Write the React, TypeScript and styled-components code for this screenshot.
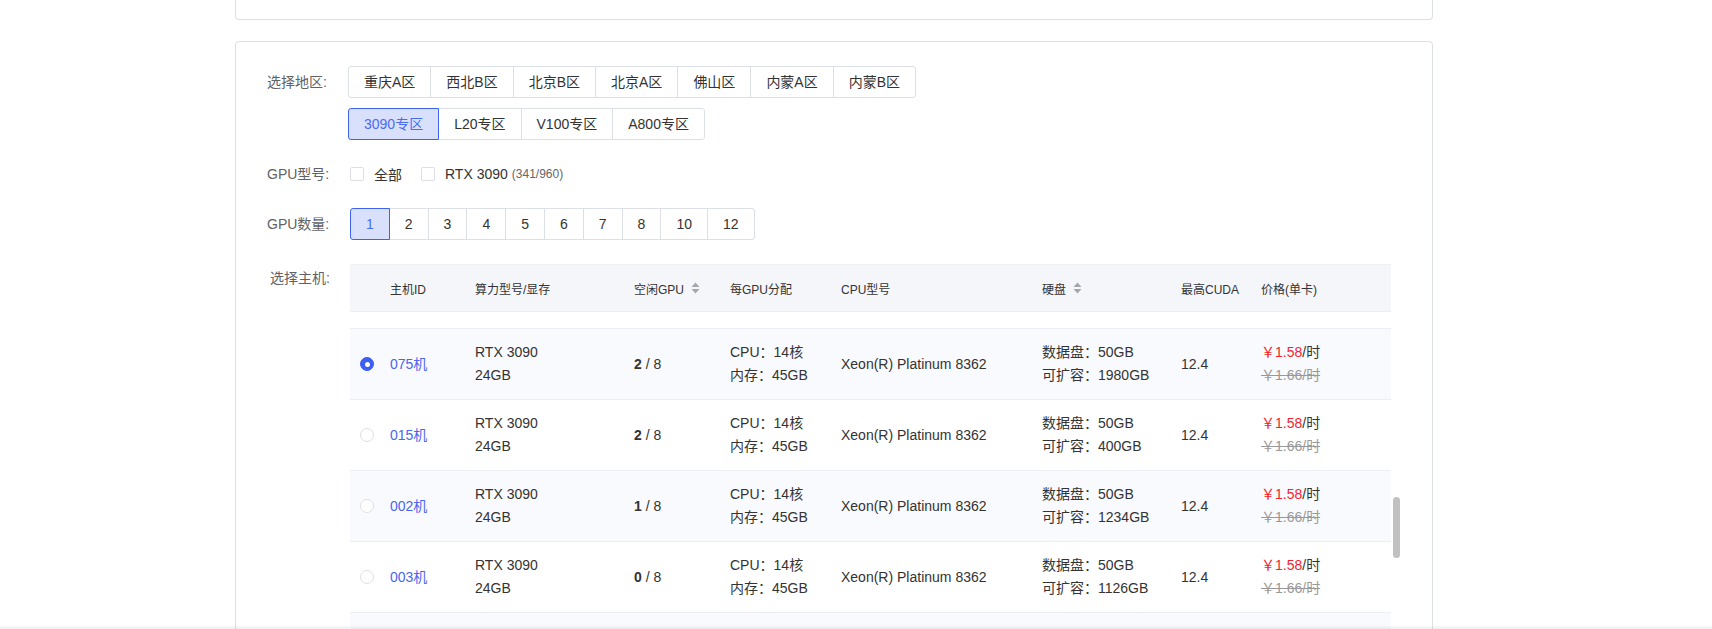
import React from 'react';
import styled, { createGlobalStyle } from 'styled-components';

const Global = createGlobalStyle`
  html, body { margin: 0; padding: 0; background: #fff; overflow: hidden; }
  body {
    font-family: "Liberation Sans", "Noto Sans CJK SC", sans-serif;
    color: #333;
    -webkit-font-smoothing: antialiased;
  }
  * { box-sizing: border-box; }
`;

const Page = styled.div`
  padding-left: 235px;
  width: 1433px;
`;

const TopCard = styled.div`
  height: 20px;
  border: 1px solid #dcdfe6;
  border-top: none;
  border-radius: 0 0 4px 4px;
  background: #fff;
`;

const MainCard = styled.div`
  margin-top: 21px;
  height: 800px;
  border: 1px solid #dcdfe6;
  border-radius: 4px;
  background: #fff;
  padding: 24px 30px 0 31px;
  display: flex;
  flex-direction: column;
`;

const FormItem = styled.div<{ $top?: boolean; $mt?: number }>`
  display: flex;
  align-items: ${p => (p.$top ? 'flex-start' : 'center')};
  margin-bottom: 18px;
  margin-top: ${p => p.$mt || 0}px;
`;

const Label = styled.div<{ $pl?: number; $lh?: number }>`
  width: 81px;
  flex-shrink: 0;
  font-size: 14px;
  color: #606266;
  line-height: ${p => p.$lh || 32}px;
  padding-left: ${p => p.$pl || 0}px;
  white-space: nowrap;
`;

const GroupStack = styled.div`
  display: flex;
  flex-direction: column;
  gap: 10px;
`;

const ButtonGroup = styled.div<{ $ml?: number }>`
  display: flex;
  margin-left: ${p => p.$ml || 0}px;
`;

const OptButton = styled.div<{ $active?: boolean }>`
  position: relative;
  z-index: ${p => (p.$active ? 1 : 0)};
  height: 32px;
  padding: 0 15px;
  display: flex;
  align-items: center;
  font-size: 14px;
  line-height: 1;
  white-space: nowrap;
  border: 1px solid ${p => (p.$active ? '#3d63f0' : '#dcdfe6')};
  background: ${p => (p.$active ? '#d9e0fc' : '#fff')};
  color: ${p => (p.$active ? '#4a6cf0' : '#333')};
  cursor: pointer;
  & + & { margin-left: -1px; }
  &:first-child { border-radius: 3px 0 0 3px; }
  &:last-child { border-radius: 0 3px 3px 0; }
`;

const CheckRow = styled.div`
  display: flex;
  align-items: center;
  height: 32px;
  padding-left: 2px;
`;

const CheckItem = styled.label`
  display: flex;
  align-items: center;
  margin-right: 19px;
  font-size: 14px;
  color: #333;
  white-space: nowrap;
`;

const CheckBox = styled.span`
  width: 14px;
  height: 14px;
  border: 1px solid #dcdfe6;
  border-radius: 2px;
  background: #fff;
  margin-right: 10px;
`;

const CheckNote = styled.span`
  font-size: 12px;
  color: #666;
  margin-left: 4px;
`;

const TableArea = styled.div`
  display: flex;
  flex-direction: column;
  padding-left: 2px;
`;

const COLS = '40px 85px 159px 96px 111px 201px 139px 80px 130px';

const HeaderRow = styled.div`
  display: grid;
  grid-template-columns: ${COLS};
  width: 1041px;
  height: 48px;
  align-items: center;
  background: #f5f6fa;
  border-top: 1px solid #eef0f5;
  border-bottom: 1px solid #ebeef5;
  font-size: 12px;
  color: #333;
`;

const HeadCell = styled.div`
  display: flex;
  align-items: center;
  white-space: nowrap;
`;

const SortIcon = styled.svg`
  margin-left: 7px;
  flex-shrink: 0;
`;

const BodyArea = styled.div`
  display: flex;
`;

const Rows = styled.div`
  width: 1041px;
  padding-top: 16px;
`;

const Row = styled.div<{ $striped?: boolean }>`
  display: grid;
  grid-template-columns: ${COLS};
  align-items: center;
  border-top: 1px solid #ebeef5;
  padding: 12px 0;
  background: ${p => (p.$striped ? '#f9fafd' : '#fff')};
  font-size: 14px;
  line-height: 23px;
  color: #333;
`;

const Cell = styled.div`
  white-space: nowrap;
`;

const RadioCell = styled.div`
  padding-left: 10px;
  display: flex;
  align-items: center;
`;

const Radio = styled.span<{ $checked?: boolean }>`
  width: 14px;
  height: 14px;
  border-radius: 50%;
  border: 1px solid ${p => (p.$checked ? '#3d5ef5' : '#dcdfe6')};
  background: ${p => (p.$checked ? '#3d5ef5' : '#fff')};
  display: flex;
  align-items: center;
  justify-content: center;
  &::after {
    content: '';
    width: 5px;
    height: 5px;
    border-radius: 50%;
    background: #fff;
    display: ${p => (p.$checked ? 'block' : 'none')};
  }
`;

const HostLink = styled.a`
  color: #4a66f0;
  text-decoration: none;
`;

const Price = styled.span`
  color: #f5222d;
`;

const OldPrice = styled.div`
  color: #999;
  text-decoration: line-through;
`;

const ScrollTrack = styled.div`
  width: 11px;
  padding-left: 2px;
`;

const Thumb = styled.div`
  width: 7px;
  height: 61px;
  margin-top: 185px;
  border-radius: 4px;
  background: #c1c1c1;
`;

const BottomShade = styled.div`
  position: fixed;
  left: 0;
  right: 0;
  bottom: 0;
  height: 4px;
  background: linear-gradient(to bottom, rgba(0, 0, 0, 0), rgba(0, 0, 0, 0.07));
  pointer-events: none;
`;

const Sort = () => (
  <SortIcon width="9" height="12" viewBox="0 0 9 12">
    <path d="M4.5 0.5 L8.5 5 L0.5 5 Z" fill="#a3a6ad" />
    <path d="M0.5 7 L8.5 7 L4.5 11.5 Z" fill="#a3a6ad" />
  </SortIcon>
);

const regionsA = ['重庆A区', '西北B区', '北京B区', '北京A区', '佛山区', '内蒙A区', '内蒙B区'];
const regionsB = ['3090专区', 'L20专区', 'V100专区', 'A800专区'];
const counts = ['1', '2', '3', '4', '5', '6', '7', '8', '10', '12'];

const hosts = [
  { id: '075机', free: '2', disk: '1980GB', checked: true },
  { id: '015机', free: '2', disk: '400GB' },
  { id: '002机', free: '1', disk: '1234GB' },
  { id: '003机', free: '0', disk: '1126GB' },
];

export default function App() {
  return (
    <>
      <Global />
      <Page>
        <TopCard />
        <MainCard>
          <FormItem $top>
            <Label>选择地区:</Label>
            <GroupStack>
              <ButtonGroup>
                {regionsA.map(r => (
                  <OptButton key={r}>{r}</OptButton>
                ))}
              </ButtonGroup>
              <ButtonGroup>
                {regionsB.map((r, i) => (
                  <OptButton key={r} $active={i === 0}>
                    {r}
                  </OptButton>
                ))}
              </ButtonGroup>
            </GroupStack>
          </FormItem>

          <FormItem>
            <Label>GPU型号:</Label>
            <CheckRow>
              <CheckItem>
                <CheckBox />
                全部
              </CheckItem>
              <CheckItem>
                <CheckBox />
                RTX 3090
                <CheckNote>(341/960)</CheckNote>
              </CheckItem>
            </CheckRow>
          </FormItem>

          <FormItem>
            <Label>GPU数量:</Label>
            <ButtonGroup $ml={2}>
              {counts.map((c, i) => (
                <OptButton key={c} $active={i === 0}>
                  {c}
                </OptButton>
              ))}
            </ButtonGroup>
          </FormItem>

          <FormItem $top $mt={6}>
            <Label $pl={3} $lh={28}>
              选择主机:
            </Label>
            <TableArea>
              <HeaderRow>
                <HeadCell />
                <HeadCell>主机ID</HeadCell>
                <HeadCell>算力型号/显存</HeadCell>
                <HeadCell>
                  空闲GPU
                  <Sort />
                </HeadCell>
                <HeadCell>每GPU分配</HeadCell>
                <HeadCell>CPU型号</HeadCell>
                <HeadCell>
                  硬盘
                  <Sort />
                </HeadCell>
                <HeadCell>最高CUDA</HeadCell>
                <HeadCell>价格(单卡)</HeadCell>
              </HeaderRow>
              <BodyArea>
                <Rows>
                  {hosts.map((h, i) => (
                    <Row key={h.id} $striped={i % 2 === 0}>
                      <RadioCell>
                        <Radio $checked={h.checked} />
                      </RadioCell>
                      <Cell>
                        <HostLink href="#">{h.id}</HostLink>
                      </Cell>
                      <Cell>
                        <div>RTX 3090</div>
                        <div>24GB</div>
                      </Cell>
                      <Cell>
                        <b>{h.free}</b> / 8
                      </Cell>
                      <Cell>
                        <div>CPU：14核</div>
                        <div>内存：45GB</div>
                      </Cell>
                      <Cell>Xeon(R) Platinum 8362</Cell>
                      <Cell>
                        <div>数据盘：50GB</div>
                        <div>可扩容：{h.disk}</div>
                      </Cell>
                      <Cell>12.4</Cell>
                      <Cell>
                        <div>
                          <Price>￥1.58</Price>/时
                        </div>
                        <OldPrice>￥1.66/时</OldPrice>
                      </Cell>
                    </Row>
                  ))}
                  <Row $striped>
                    <RadioCell />
                  </Row>
                </Rows>
                <ScrollTrack>
                  <Thumb />
                </ScrollTrack>
              </BodyArea>
            </TableArea>
          </FormItem>
        </MainCard>
      </Page>
      <BottomShade />
    </>
  );
}
